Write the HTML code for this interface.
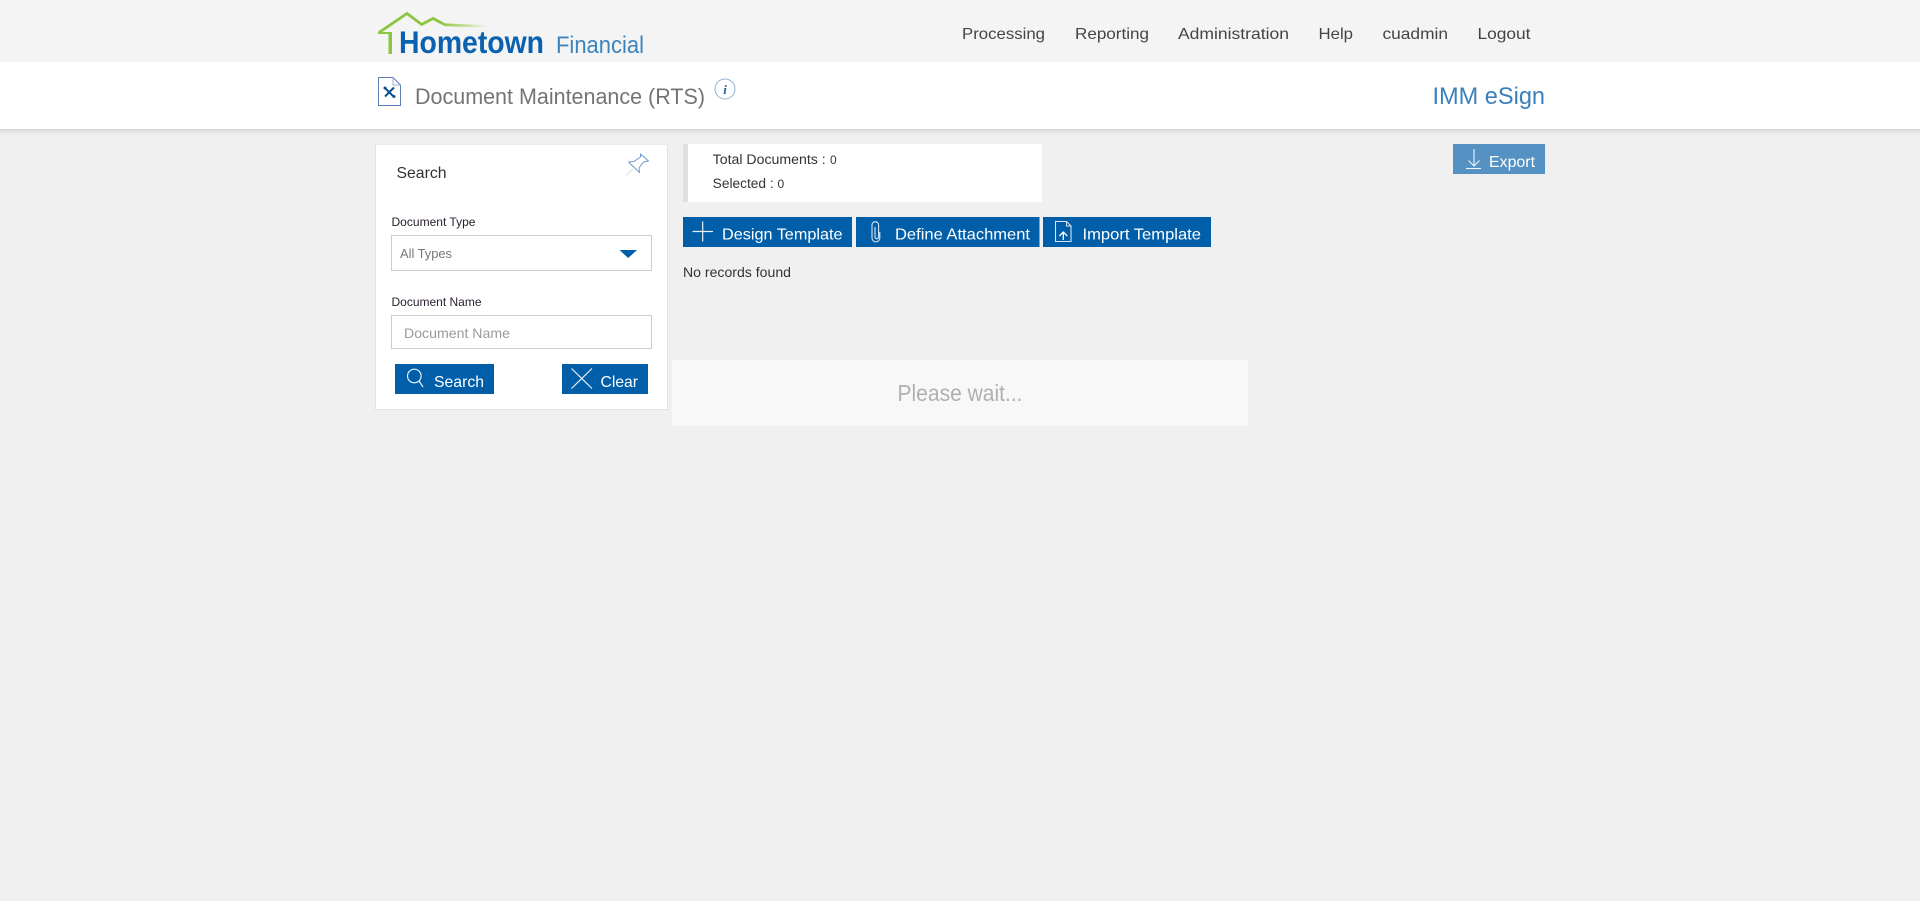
<!DOCTYPE html>
<html lang="en">
<head>
<meta charset="utf-8">
<title>Document Maintenance (RTS)</title>
<style>
html,body{margin:0;padding:0;background:#f0f0f0;width:1920px;height:901px;overflow:hidden}
svg{display:block;position:absolute;left:0;top:0}
text{font-family:"Liberation Sans",Arial,sans-serif;white-space:pre}
</style>
</head>
<body>
<svg width="1920" height="901" viewBox="0 0 1920 901" xmlns="http://www.w3.org/2000/svg">
<defs>
<linearGradient id="roof" gradientUnits="userSpaceOnUse" x1="440" y1="0" x2="488" y2="0">
<stop offset="0" stop-color="#8cc63f"/><stop offset="1" stop-color="#8cc63f" stop-opacity="0"/>
</linearGradient>
<linearGradient id="sh" x1="0" y1="0" x2="0" y2="1">
<stop offset="0" stop-color="#d8d8d8"/><stop offset="1" stop-color="#f0f0f0"/>
</linearGradient>
</defs>

<rect width="1920" height="901" fill="#f0f0f0"/>
<rect width="1920" height="62" fill="#f4f4f4"/>
<rect y="129" width="1920" height="6" fill="url(#sh)"/>
<rect y="62" width="1920" height="67" fill="#fff"/>

<!-- logo -->
<path d="M379 32.500 L407 13.500 L421.700 24.500 L433 18.500 L445 24.800 L488 26.500" fill="none" stroke="url(#roof)" stroke-width="2.800"/>
<path d="M378 32 H392 V54 H388.500 V34 H378 Z" fill="#8cc63f"/>
<text x="399" y="53" font-size="31.500" font-weight="700" fill="#0a62ae" textLength="145" lengthAdjust="spacingAndGlyphs">Hometown</text>
<text x="556" y="53" font-size="24" fill="#3b84be" textLength="88" lengthAdjust="spacingAndGlyphs">Financial</text>

<!-- nav -->
<g font-size="16" fill="#444">
<text x="962" y="39" textLength="83" lengthAdjust="spacingAndGlyphs">Processing</text>
<text x="1075" y="39" textLength="74" lengthAdjust="spacingAndGlyphs">Reporting</text>
<text x="1178" y="39" textLength="111" lengthAdjust="spacingAndGlyphs">Administration</text>
<text x="1318.500" y="39" textLength="34.500" lengthAdjust="spacingAndGlyphs">Help</text>
<text x="1382.500" y="39" textLength="65.500" lengthAdjust="spacingAndGlyphs">cuadmin</text>
<text x="1477.500" y="39" textLength="53" lengthAdjust="spacingAndGlyphs">Logout</text>
</g>

<!-- title bar -->
<path d="M378.500 77.500 H393 L400.500 85 V105.500 H378.500 Z" fill="#fff" stroke="#5c7fb8" stroke-width="1"/>
<path d="M393 77.500 V85 H400.500" fill="none" stroke="#9db4d4" stroke-width="1"/>
<path d="M385 88 L393.500 96.500 M394 87.500 L385 96.500" stroke="#0d4f91" stroke-width="2" fill="none"/>
<circle cx="385" cy="88" r="1.500" fill="#0d4f91"/>
<circle cx="394" cy="96.500" r="1.500" fill="#0d4f91"/>
<text x="415" y="104" font-size="22" fill="#747474" textLength="290" lengthAdjust="spacingAndGlyphs">Document Maintenance (RTS)</text>
<circle cx="725" cy="89" r="10" fill="#fff" stroke="#8fb2d4" stroke-width="1"/>
<text x="725" y="94" font-size="13" font-weight="700" font-style="italic" fill="#1f5f9f" text-anchor="middle" style="font-family:'Liberation Serif',serif">i</text>
<text x="1432.500" y="104" font-size="24" fill="#3a80bb" textLength="112.500" lengthAdjust="spacingAndGlyphs">IMM eSign</text>

<!-- search panel -->
<rect x="375" y="144.500" width="293" height="265.500" fill="#e3e3e3"/>
<rect x="376" y="145" width="291" height="264" fill="#fff"/>
<text x="396.500" y="178" font-size="16" fill="#333" textLength="50" lengthAdjust="spacingAndGlyphs">Search</text>
<!-- pin -->
<path d="M640.500 154 L648.500 161 L643.500 162 L639 168 L639.500 172.500 L628.500 162 L634 161.500 L640.500 157 Z" fill="#fff" stroke="#6f97c9" stroke-width="1" stroke-linejoin="round"/>
<path d="M626 175.500 L632.500 169" stroke="#d5dae2" stroke-width="1"/>

<text x="391.500" y="226" font-size="12" fill="#2a2030" textLength="84" lengthAdjust="spacingAndGlyphs">Document Type</text>
<rect x="391.500" y="235.500" width="260" height="35" fill="#fff" stroke="#cdcdcd" stroke-width="1"/>
<text x="400" y="258" font-size="13" fill="#777" textLength="52" lengthAdjust="spacingAndGlyphs">All Types</text>
<path d="M619.500 250 H637 L628.200 258 Z" fill="#015ea8"/>

<text x="391.500" y="306" font-size="12" fill="#2a2030" textLength="90" lengthAdjust="spacingAndGlyphs">Document Name</text>
<rect x="391.500" y="315.500" width="260" height="33" fill="#fff" stroke="#cdcdcd" stroke-width="1"/>
<text x="404" y="338" font-size="14" fill="#9a9a9a" textLength="106" lengthAdjust="spacingAndGlyphs">Document Name</text>

<rect x="395" y="364" width="99" height="30" fill="#015ea8"/>
<circle cx="414.300" cy="376" r="6.800" fill="none" stroke="#e8f0f8" stroke-width="1.200"/>
<path d="M419 381 L423 387" stroke="#e8f0f8" stroke-width="1.200"/>
<text x="434" y="387" font-size="16" fill="#fff" textLength="50" lengthAdjust="spacingAndGlyphs">Search</text>

<rect x="562" y="364" width="86" height="30" fill="#015ea8"/>
<path d="M571.500 368.500 L592 388.500 M592 368.500 L571.500 388.500" stroke="#e8f0f8" stroke-width="1.200"/>
<text x="600.500" y="387" font-size="16" fill="#fff" textLength="37.500" lengthAdjust="spacingAndGlyphs">Clear</text>

<!-- summary -->
<rect x="683" y="144" width="359" height="58" fill="#fff"/>
<rect x="683" y="144" width="5" height="58" fill="#e0e0e0"/>
<text x="712.700" y="164" font-size="13.500" fill="#333" textLength="113" lengthAdjust="spacingAndGlyphs">Total Documents :</text>
<text x="830" y="164" font-size="12" fill="#333">0</text>
<text x="712.700" y="188" font-size="13.500" fill="#333" textLength="61" lengthAdjust="spacingAndGlyphs">Selected :</text>
<text x="777.500" y="188" font-size="12" fill="#333">0</text>

<!-- action buttons -->
<rect x="683" y="217" width="169" height="30" fill="#015ea8"/>
<path d="M692.500 231.500 H713 M702.700 221.500 V241.500" stroke="#e8f0f8" stroke-width="1.200"/>
<text x="722" y="239.500" font-size="16" fill="#fff" textLength="120.500" lengthAdjust="spacingAndGlyphs">Design Template</text>

<rect x="856" y="217" width="183.500" height="30" fill="#015ea8"/>
<path d="M875 227 V237 A1.800 1.800 0 0 0 878.600 237 V225 A3.300 3.300 0 0 0 872 225 V238 A3.900 3.900 0 0 0 879.800 238 V232" fill="none" stroke="#d7e5f2" stroke-width="1.100"/>
<text x="895" y="239.500" font-size="16" fill="#fff" textLength="135" lengthAdjust="spacingAndGlyphs">Define Attachment</text>

<rect x="1043" y="217" width="168" height="30" fill="#015ea8"/>
<path d="M1055.500 221.500 H1066.500 L1071 226 V241.500 H1055.500 Z" fill="none" stroke="#d7e5f2" stroke-width="1.100"/>
<path d="M1066.500 221.500 V226 H1071" fill="none" stroke="#d7e5f2" stroke-width="1"/>
<path d="M1063.300 240 V232 M1059.300 236 L1063.300 232 L1067.300 236" fill="none" stroke="#fff" stroke-width="1.300"/>
<text x="1082.500" y="239.500" font-size="16" fill="#fff" textLength="118.500" lengthAdjust="spacingAndGlyphs">Import Template</text>

<text x="683" y="277" font-size="14" fill="#333" textLength="108" lengthAdjust="spacingAndGlyphs">No records found</text>

<!-- export -->
<rect x="1453" y="144" width="92" height="30" fill="#5591c3"/>
<path d="M1474 149 V166 M1468.500 160.500 L1474 166 L1479.500 160.500" fill="none" stroke="#f0f6fb" stroke-width="1.100"/>
<path d="M1466 168.500 H1481" stroke="#f0f6fb" stroke-width="1.100"/>
<text x="1489" y="167" font-size="16" fill="#fff" textLength="46" lengthAdjust="spacingAndGlyphs">Export</text>

<!-- please wait -->
<rect x="672" y="360" width="576" height="66" fill="#f8f8f8"/>
<text x="897.500" y="401" font-size="23" fill="#b0b0b0" textLength="125" lengthAdjust="spacingAndGlyphs">Please wait...</text>
</svg>
</body>
</html>
